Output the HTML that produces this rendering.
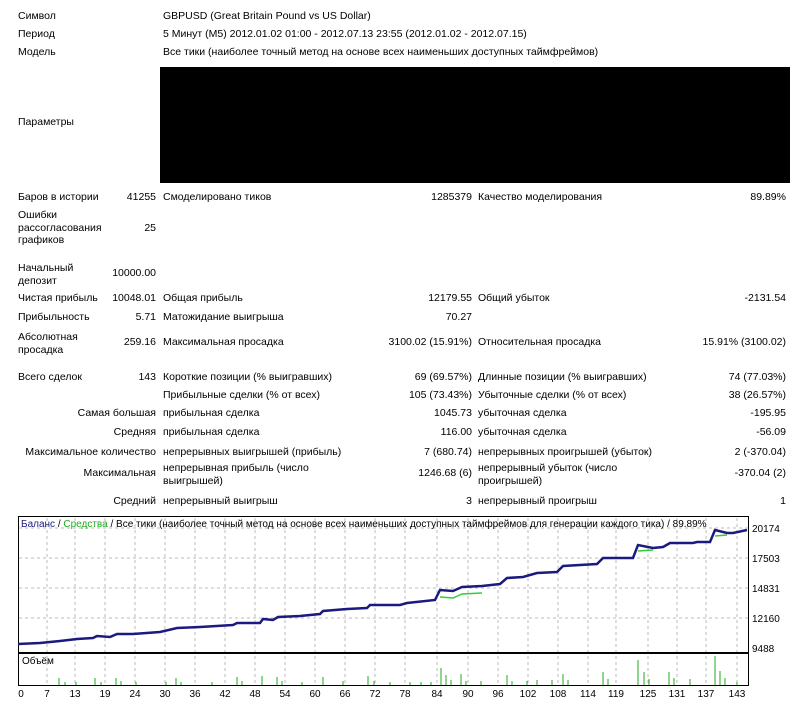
<!DOCTYPE html>
<html><head><meta charset="utf-8"><style>
body{margin:0;width:800px;height:702px;background:#fff;position:relative;overflow:hidden;font-family:"Liberation Sans","DejaVu Sans",sans-serif;font-size:10.5px;color:#000}
.t{position:absolute;white-space:nowrap;line-height:12px}
.r{text-align:right}
</style></head><body>
<div class="t" style="left:18px;top:10px">Символ</div>
<div class="t" style="left:163px;top:10px">GBPUSD (Great Britain Pound vs US Dollar)</div>
<div class="t" style="left:18px;top:28px">Период</div>
<div class="t" style="left:163px;top:28px">5 Минут (M5) 2012.01.02 01:00 - 2012.07.13 23:55 (2012.01.02 - 2012.07.15)</div>
<div class="t" style="left:18px;top:46px">Модель</div>
<div class="t" style="left:163px;top:46px">Все тики (наиболее точный метод на основе всех наименьших доступных таймфреймов)</div>
<div style="position:absolute;left:160px;top:67px;width:630px;height:116px;background:#000"></div>
<div class="t" style="left:18px;top:116px">Параметры</div>

<div class="t" style="left:18px;top:191px">Баров в истории</div>
<div class="t r" style="right:644px;top:191px">41255</div>
<div class="t" style="left:163px;top:191px">Смоделировано тиков</div>
<div class="t r" style="right:328px;top:191px">1285379</div>
<div class="t" style="left:478px;top:191px">Качество моделирования</div>
<div class="t r" style="right:14px;top:191px">89.89%</div>

<div class="t" style="left:18px;top:209px;line-height:12.5px">Ошибки<br>рассогласования<br>графиков</div>
<div class="t r" style="right:644px;top:222px">25</div>

<div class="t" style="left:18px;top:262px;line-height:12.5px">Начальный<br>депозит</div>
<div class="t r" style="right:644px;top:267px">10000.00</div>

<div class="t" style="left:18px;top:292px">Чистая прибыль</div>
<div class="t r" style="right:644px;top:292px">10048.01</div>
<div class="t" style="left:163px;top:292px">Общая прибыль</div>
<div class="t r" style="right:328px;top:292px">12179.55</div>
<div class="t" style="left:478px;top:292px">Общий убыток</div>
<div class="t r" style="right:14px;top:292px">-2131.54</div>

<div class="t" style="left:18px;top:311px">Прибыльность</div>
<div class="t r" style="right:644px;top:311px">5.71</div>
<div class="t" style="left:163px;top:311px">Матожидание выигрыша</div>
<div class="t r" style="right:328px;top:311px">70.27</div>

<div class="t" style="left:18px;top:331px;line-height:12.5px">Абсолютная<br>просадка</div>
<div class="t r" style="right:644px;top:336px">259.16</div>
<div class="t" style="left:163px;top:336px">Максимальная просадка</div>
<div class="t r" style="right:328px;top:336px">3100.02 (15.91%)</div>
<div class="t" style="left:478px;top:336px">Относительная просадка</div>
<div class="t r" style="right:14px;top:336px">15.91% (3100.02)</div>

<div class="t" style="left:18px;top:371px">Всего сделок</div>
<div class="t r" style="right:644px;top:371px">143</div>
<div class="t" style="left:163px;top:371px">Короткие позиции (% выигравших)</div>
<div class="t r" style="right:328px;top:371px">69 (69.57%)</div>
<div class="t" style="left:478px;top:371px">Длинные позиции (% выигравших)</div>
<div class="t r" style="right:14px;top:371px">74 (77.03%)</div>

<div class="t" style="left:163px;top:389px">Прибыльные сделки (% от всех)</div>
<div class="t r" style="right:328px;top:389px">105 (73.43%)</div>
<div class="t" style="left:478px;top:389px">Убыточные сделки (% от всех)</div>
<div class="t r" style="right:14px;top:389px">38 (26.57%)</div>

<div class="t r" style="right:644px;top:407px">Самая большая</div>
<div class="t" style="left:163px;top:407px">прибыльная сделка</div>
<div class="t r" style="right:328px;top:407px">1045.73</div>
<div class="t" style="left:478px;top:407px">убыточная сделка</div>
<div class="t r" style="right:14px;top:407px">-195.95</div>

<div class="t r" style="right:644px;top:426px">Средняя</div>
<div class="t" style="left:163px;top:426px">прибыльная сделка</div>
<div class="t r" style="right:328px;top:426px">116.00</div>
<div class="t" style="left:478px;top:426px">убыточная сделка</div>
<div class="t r" style="right:14px;top:426px">-56.09</div>

<div class="t r" style="right:644px;top:446px">Максимальное количество</div>
<div class="t" style="left:163px;top:446px">непрерывных выигрышей (прибыль)</div>
<div class="t r" style="right:328px;top:446px">7 (680.74)</div>
<div class="t" style="left:478px;top:446px">непрерывных проигрышей (убыток)</div>
<div class="t r" style="right:14px;top:446px">2 (-370.04)</div>

<div class="t r" style="right:644px;top:467px">Максимальная</div>
<div class="t" style="left:163px;top:462px;line-height:12.5px">непрерывная прибыль (число<br>выигрышей)</div>
<div class="t r" style="right:328px;top:467px">1246.68 (6)</div>
<div class="t" style="left:478px;top:462px;line-height:12.5px">непрерывный убыток (число<br>проигрышей)</div>
<div class="t r" style="right:14px;top:467px">-370.04 (2)</div>

<div class="t r" style="right:644px;top:495px">Средний</div>
<div class="t" style="left:163px;top:495px">непрерывный выигрыш</div>
<div class="t r" style="right:328px;top:495px">3</div>
<div class="t" style="left:478px;top:495px">непрерывный проигрыш</div>
<div class="t r" style="right:14px;top:495px">1</div>

<svg style="position:absolute;left:0;top:510px" width="800" height="192" viewBox="0 510 800 192">
<g stroke="#bbb" stroke-dasharray="3,3" stroke-width="1">
<path d="M47 518V685M75 518V685M105 518V685M135 518V685M165 518V685M195 518V685M225 518V685M255 518V685M285 518V685M315 518V685M345 518V685M375 518V685M405 518V685M437 518V685M468 518V685M498 518V685M528 518V685M558 518V685M588 518V685M616 518V685M648 518V685M677 518V685M706 518V685M737 518V685"/>
<path d="M19 528H748M19 558H748M19 588H748M19 618H748"/>
</g>
<rect x="18.5" y="516.5" width="730" height="169" fill="none" stroke="#000"/>
<path d="M18 653H749" stroke="#000" stroke-width="2"/>
<path d="M440 597 L453 598 L462 594 L482 593 M638 551 L653 550 M715 536 L727 535" stroke="#3c3" fill="none" stroke-width="1.5"/>
<polyline fill="none" stroke="#1a1a80" stroke-width="2.5" points="18,644 40,643 60,641 77,639 93,638 97,636 110,637 117,634 133,634 160,632 177,628 200,627 233,625 237,623 260,623 263,619 273,620 278,617 300,616 320,614 323,611 347,609 367,608 370,605 400,605 407,603 435,600 440,590 453,591 462,587 482,586 500,584 507,578 523,577 537,573 557,572 563,566 597,564 603,558 633,558 638,545 653,548 663,547 670,543 693,543 697,542 710,542 715,530 727,533 733,533 747,530"/>
<g stroke="#2a2" stroke-width="1">
<path d="M59 685v-7M65 685v-3M76 685v-3M95 685v-7M101 685v-3M116 685v-7M121 685v-4M136 685v-3M166 685v-3M176 685v-7M181 685v-3M212 685v-3M237 685v-8M242 685v-4M262 685v-9M277 685v-8M282 685v-4M302 685v-3M323 685v-8M343 685v-4M368 685v-9M374 685v-4M390 685v-3M410 685v-3M421 685v-3M431 685v-3M441 685v-17M446 685v-10M451 685v-5M461 685v-11M466 685v-4M481 685v-4M507 685v-10M512 685v-4M527 685v-4M537 685v-5M552 685v-5M563 685v-11M568 685v-5M603 685v-13M608 685v-6M638 685v-25M644 685v-13M649 685v-6M669 685v-13M674 685v-7M690 685v-6M715 685v-29M720 685v-14M725 685v-7M737 685v-3"/>
</g>
<g font-family="Liberation Sans, DejaVu Sans, sans-serif" font-size="10" fill="#000">
<text x="21" y="527"><tspan fill="#1a1a80">Баланс</tspan> / <tspan fill="#2a2">Средства</tspan> / Все тики (наиболее точный метод на основе всех наименьших доступных таймфреймов для генерации каждого тика) / 89.89%</text>
<text x="22" y="664">Объём</text>
<text x="752" y="532">20174</text><text x="752" y="562">17503</text><text x="752" y="592">14831</text><text x="752" y="622">12160</text><text x="752" y="652">9488</text>
<g text-anchor="middle">
<text x="21" y="697">0</text><text x="47" y="697">7</text><text x="75" y="697">13</text><text x="105" y="697">19</text><text x="135" y="697">24</text><text x="165" y="697">30</text><text x="195" y="697">36</text><text x="225" y="697">42</text><text x="255" y="697">48</text><text x="285" y="697">54</text><text x="315" y="697">60</text><text x="345" y="697">66</text><text x="375" y="697">72</text><text x="405" y="697">78</text><text x="437" y="697">84</text><text x="468" y="697">90</text><text x="498" y="697">96</text><text x="528" y="697">102</text><text x="558" y="697">108</text><text x="588" y="697">114</text><text x="616" y="697">119</text><text x="648" y="697">125</text><text x="677" y="697">131</text><text x="706" y="697">137</text><text x="737" y="697">143</text>
</g></g>
</svg>
</body></html>
